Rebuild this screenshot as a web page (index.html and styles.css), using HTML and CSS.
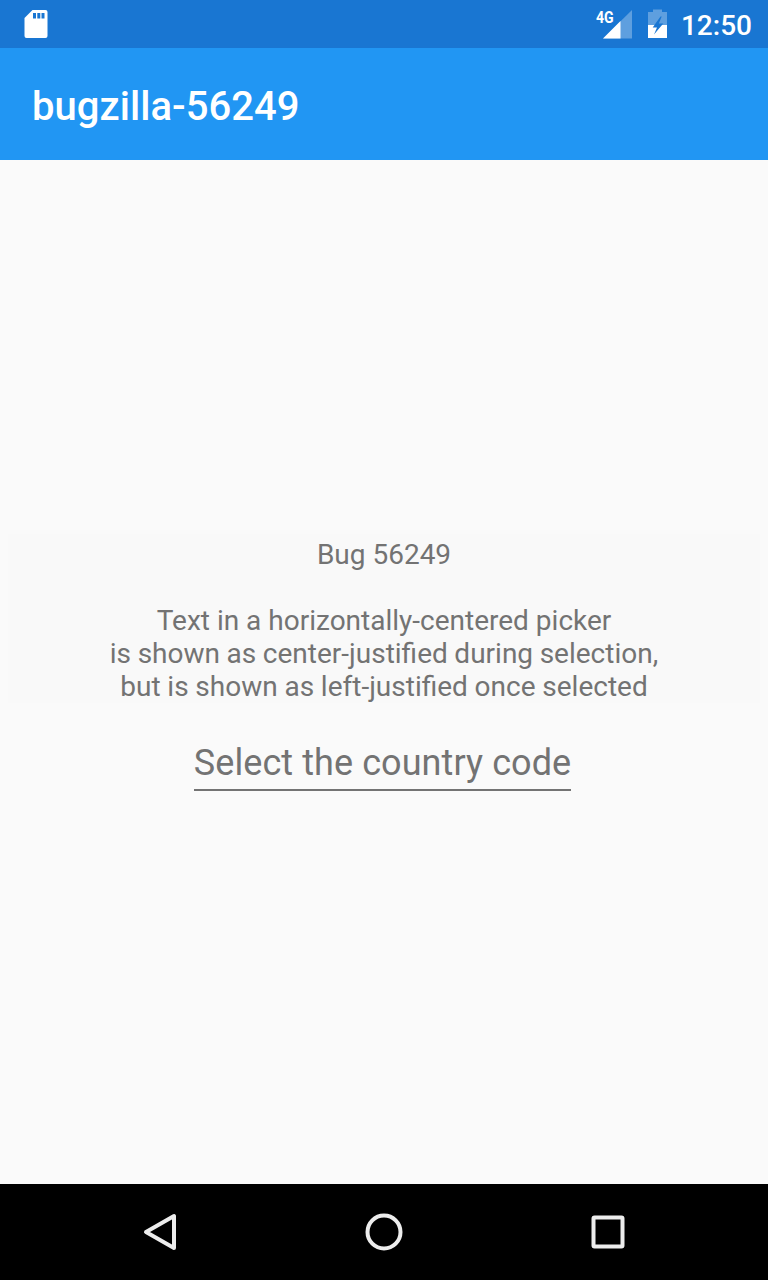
FILE: index.html
```html
<!DOCTYPE html>
<html lang="en">
<head>
<meta charset="utf-8">
<title>bugzilla-56249</title>
<link rel="stylesheet" href="styles.css">
</head>
<body>
<div class="screen">
  <header class="status-bar">
    <svg class="sd-card" width="24" height="30" viewBox="0 0 24 30"><path fill="#fff" fill-rule="evenodd" d="M8.500 1H21.500a2 2 0 0 1 2 2V27a2 2 0 0 1-2 2H2.500a2 2 0 0 1-2-2V9ZM9 4V9.500H12V4ZM13.300 4V9.500H16.300V4ZM17.500 4V9.500H20.500V4Z"/></svg>
    <div class="indicators">
      <div class="signal">
        <span class="network">4G</span>
        <svg width="30" height="30" viewBox="0 0 30 30"><path fill="#fff" fill-opacity=".3" d="M0 29.500 29 1V29.500Z"/><path fill="#fff" d="M0 29.500 17.500 12V29.500Z"/></svg>
      </div>
      <svg class="battery" width="20" height="30" viewBox="0 0 20 30"><path fill="#fff" fill-opacity=".3" d="M5 .5H14V3H19V16H0V3H5Z"/><path fill="#fff" d="M0 16H19V29H0Z"/><path fill="#1976d2" d="M12.500 7.500 4.700 18.500H9L6 25.500 15.300 14.500H10.800L13.700 7.500Z"/></svg>
      <span class="clock">12:50</span>
    </div>
  </header>
  <div class="app-bar"><h1 class="title">bugzilla-56249</h1></div>
  <main class="content">
    <p class="description">Bug 56249<br><br>Text in a horizontally-centered picker<br><span class="line-tight">is shown as center-justified during selection,</span><br><span class="line-snug">but is shown as left-justified once selected</span></p>
    <div class="picker">Select the country code</div>
  </main>
  <nav class="nav-bar">
    <svg width="40" height="40" viewBox="0 0 40 40"><path d="M34 4V36L6 20Z"/></svg>
    <svg width="40" height="40" viewBox="0 0 40 40"><circle cx="20" cy="20" r="16.500"/></svg>
    <svg width="40" height="40" viewBox="0 0 40 40"><rect x="5.500" y="5.500" width="29" height="29" rx="1"/></svg>
  </nav>
</div>
</body>
</html>
```
FILE: styles.css
```css
body { margin: 0; font-family: Roboto, sans-serif; }
.screen { width: 768px; height: 1280px; display: flex; flex-direction: column; background: #fafafa; overflow: hidden; }
.status-bar { height: 48px; display: flex; justify-content: space-between; align-items: center; padding: 0 16px 0 24px; box-sizing: border-box; background: #1976d2; color: #fff; }
.indicators { display: flex; align-items: center; }
.signal { position: relative; display: flex; margin-right: 15px; }
.network { position: absolute; left: -7px; top: 0; font-size: 17px; line-height: 16px; font-weight: 700; transform: scaleX(.83); transform-origin: left; }
.battery { margin-right: 13px; }
.clock { font-size: 28px; font-weight: 500; line-height: 44px; padding-top: 4px; }
.app-bar { height: 112px; display: flex; align-items: center; padding: 6px 32px 0; box-sizing: border-box; background: #2196f3; color: #fff; }
.title { margin: 0; font-size: 40px; line-height: 48px; font-weight: 500; letter-spacing: 0.05px; }
.content { flex: 1; display: flex; flex-direction: column; align-items: center; padding-top: 374px; box-sizing: border-box; color: #737373; }
.description { width: 752px; margin: 0; padding: 4px 0 0; font-size: 28px; line-height: 33px; text-align: center; background: #f9f9f9; }
.line-tight { word-spacing: -0.35px; }
.line-snug { word-spacing: -0.2px; }
.picker { margin: 38px 3px 0 0; font-size: 36px; line-height: 44px; padding-bottom: 4px; border-bottom: 2px solid #737373; letter-spacing: 0.08px; white-space: nowrap; }
.nav-bar { height: 96px; display: flex; justify-content: center; align-items: center; gap: 184px; background: #000; }
.nav-bar svg { fill: none; stroke: #ededed; stroke-width: 4; stroke-linejoin: round; }
```
